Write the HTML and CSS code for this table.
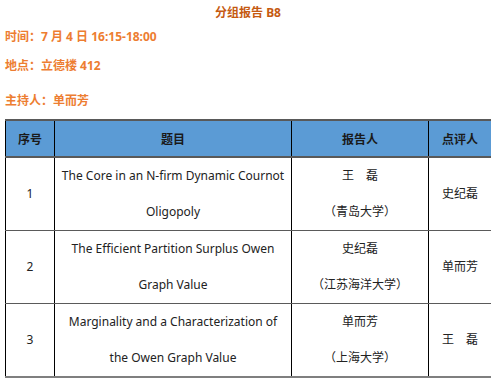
FILE: index.html
```html
<!DOCTYPE html>
<html lang="zh">
<head>
<meta charset="utf-8">
<link rel="stylesheet" href="styles.css">
</head>
<body>
<div class="page">
  <h1 class="title">分组报告 B8</h1>
  <p class="info time">时间：7 月 4 日 16:15-18:00</p>
  <p class="info place">地点：立德楼 412</p>
  <p class="info host">主持人：单而芳</p>
  <table class="sched">
    <colgroup>
      <col class="c1"><col class="c2"><col class="c3"><col class="c4">
    </colgroup>
    <thead>
      <tr><th>序号</th><th>题目</th><th>报告人</th><th>点评人</th></tr>
    </thead>
    <tbody>
      <tr>
        <td>1</td>
        <td>The Core in an N-firm Dynamic Cournot<br>Oligopoly</td>
        <td>王　磊<br>（青岛大学）</td>
        <td>史纪磊</td>
      </tr>
      <tr>
        <td>2</td>
        <td>The Efficient Partition Surplus Owen<br>Graph Value</td>
        <td>史纪磊<br>（江苏海洋大学）</td>
        <td>单而芳</td>
      </tr>
      <tr>
        <td>3</td>
        <td>Marginality and a Characterization of<br>the Owen Graph Value</td>
        <td>单而芳<br>（上海大学）</td>
        <td>王　磊</td>
      </tr>
    </tbody>
  </table>
</div>
</body>
</html>
```

FILE: styles.css
```css
html, body {
  margin: 0;
  padding: 0;
  background: #ffffff;
}
body {
  font-family: "Noto Sans", "Noto Sans CJK SC", sans-serif;
  font-size: 12px;
  color: #222222;
}
.page {
  padding: 0 0 0 5px;
}
.title {
  margin: 0;
  padding-top: 3px;
  height: 20px;
  line-height: 20px;
  font-size: 12px;
  font-weight: bold;
  text-align: center;
  color: #c55a11;
}
.info {
  margin: 0;
  font-size: 12px;
  font-weight: bold;
  color: #ed7d31;
  line-height: 20px;
}
.time { margin-top: 4px; }
.place { margin-top: 9px; }
.host { margin-top: 15px; }
.sched {
  margin-top: 8px;
  width: 486px;
  border-collapse: collapse;
  table-layout: fixed;
}
.c1 { width: 49px; }
.c2 { width: 237px; }
.c3 { width: 137px; }
.c4 { width: 63px; }
.sched th, .sched td {
  border-left: 1px solid #000000;
  border-right: 1px solid #000000;
  border-top: 1px solid #5a5a5a;
  border-bottom: 1px solid #5a5a5a;
  text-align: center;
  padding: 0;
}
.sched thead th {
  background: #5b9bd5;
  height: 35px;
  font-weight: bold;
  color: #1a1a1a;
  border-top: 2px solid #595959;
  border-bottom: 2px solid #595959;
}
.sched tbody td {
  height: 72px;
  line-height: 36px;
}
.sched tbody tr:last-child td {
  border-bottom: 2px solid #7f7f7f;
}
```
